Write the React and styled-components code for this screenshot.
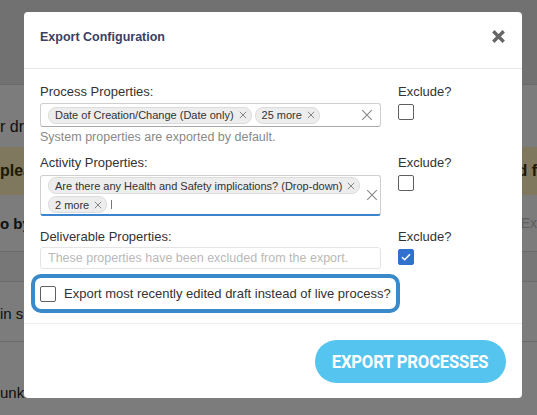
import React from "react";
import styled, { createGlobalStyle } from "styled-components";

const Global = createGlobalStyle`
  html, body { margin: 0; padding: 0; }
  body { font-family: "Liberation Sans", Arial, sans-serif; width: 537px; height: 415px; overflow: hidden; background: #f9f9f9; }
`;

const Page = styled.div`
  position: relative;
  width: 537px;
  height: 415px;
  overflow: hidden;
  background: #f9f9f9;
`;

const TopBar = styled.div`
  height: 85px;
  background: #e3e3e3;
  border-bottom: 1px solid #d4d4d4;
  box-sizing: border-box;
`;

const PageRow = styled.div`
  display: flex;
  justify-content: space-between;
  align-items: center;
  height: ${(p) => p.h}px;
  background: ${(p) => p.bg || "transparent"};
  border-bottom: ${(p) => (p.line ? "1px solid #d6d6d6" : "none")};
  box-sizing: border-box;
  white-space: nowrap;
  font-size: 16px;
  color: #222;
  padding-top: ${(p) => p.pt || 0}px;
`;

const PageText = styled.span`
  font-weight: ${(p) => p.weight || 400};
  color: ${(p) => p.color || "#222"};
  font-size: ${(p) => p.size || 16}px;
`;

const Overlay = styled.div`
  position: absolute;
  inset: 0;
  background: rgba(0, 0, 0, 0.5);
  padding: 12px 0 0 24px;
  box-sizing: border-box;
`;

const Modal = styled.div`
  width: 498px;
  height: 386px;
  background: #fff;
  border-radius: 4px;
  display: flex;
  flex-direction: column;
  box-sizing: border-box;
`;

const Header = styled.div`
  height: 57px;
  display: flex;
  align-items: center;
  justify-content: space-between;
  padding: 0 16px 6px 16px;
  border-bottom: 1px solid #e6e6e6;
  box-sizing: border-box;
`;

const Title = styled.h2`
  margin: 0;
  font-size: 12.5px;
  font-weight: 700;
  color: #3b4064;
`;

const CloseBtn = styled.button`
  border: 0;
  background: none;
  padding: 0;
  width: 14px;
  height: 14px;
  display: flex;
  cursor: pointer;
`;

const Body = styled.div`
  padding: 15px 16px 10px 16px;
  display: flex;
  flex-direction: column;
  border-bottom: 1px solid #ececec;
`;

const Section = styled.div`
  display: grid;
  grid-template-columns: 341px 1fr;
  column-gap: 17px;
  margin-top: ${(p) => p.mt || 0}px;
`;

const Col = styled.div`
  display: flex;
  flex-direction: column;
`;

const Label = styled.label`
  font-size: 13px;
  line-height: 16px;
  color: #333;
`;

const Field = styled.div`
  margin-top: ${(p) => p.mt}px;
  min-height: ${(p) => p.h}px;
  box-sizing: border-box;
  border: 1px solid ${(p) => (p.disabled ? "#e4e4e4" : "#cfcfcf")};
  border-bottom: ${(p) =>
    p.focus ? "2px solid #3d84cf" : p.disabled ? "1px solid #e4e4e4" : "1px solid #a8a8a8"};
  border-radius: 3px;
  display: flex;
  align-items: center;
  padding: 0 6px 0 7px;
  gap: 6px;
`;

const Tags = styled.div`
  flex: 1;
  display: flex;
  flex-wrap: wrap;
  gap: 2px 3px;
  align-items: center;
`;

const Tag = styled.span`
  display: inline-flex;
  align-items: center;
  gap: 5px;
  height: 15px;
  padding: 0 4px 0 6px;
  background: #ededed;
  border: 1px solid #dcdcdc;
  border-radius: 8px;
  font-size: 11px;
  color: #333;
  white-space: nowrap;
`;

const Caret = styled.span`
  width: 1px;
  height: 9px;
  background: #777;
  margin-left: 1px;
`;

const ClearIcon = styled.span`
  display: flex;
  flex: none;
  width: 12px;
  height: 12px;
  margin-right: 1px;
`;

const Placeholder = styled.span`
  font-size: 12.5px;
  color: #b9b9b9;
`;

const Help = styled.div`
  font-size: 12.5px;
  line-height: 16px;
  color: #8a8a8a;
  margin-top: 2px;
`;

const Box = styled.span`
  width: 16px;
  height: 16px;
  box-sizing: border-box;
  border-radius: 2px;
  border: 1px solid ${(p) => (p.checked ? "#3270cd" : "#606060")};
  background: ${(p) => (p.checked ? "#3270cd" : "#fff")};
  display: inline-flex;
  align-items: center;
  justify-content: center;
  margin-top: ${(p) => p.mt || 0}px;
  flex: none;
`;

const Highlight = styled.div`
  margin: 5px 0 0 -9px;
  width: 369px;
  height: 39px;
  box-sizing: border-box;
  border: 4px solid #3a8ac9;
  border-radius: 10px;
  display: flex;
  align-items: center;
  gap: 8px;
  padding-left: 5px;
  font-size: 13px;
  color: #333;
  white-space: nowrap;
`;

const Footer = styled.div`
  flex: 1;
  display: flex;
  justify-content: flex-end;
  align-items: flex-start;
  padding: 16px 16px 0 0;
`;

const ExportBtn = styled.button`
  width: 191px;
  height: 43px;
  border: 0;
  border-radius: 22px;
  background: #55c4ee;
  color: #fff;
  font-family: Roboto, "Liberation Sans", sans-serif;
  font-weight: 700;
  font-size: 18.5px;
  letter-spacing: -0.2px;
  cursor: pointer;
  display: flex;
  align-items: center;
  justify-content: center;
`;

const BtnText = styled.span`
  display: inline-block;
  transform: scaleX(0.9);
`;

const SmallX = ({ size = 8, color = "#777", w = 1.1 }) => (
  <svg width={size} height={size} viewBox="0 0 10 10">
    <path d="M1 1L9 9M9 1L1 9" stroke={color} strokeWidth={w} fill="none" />
  </svg>
);

const Check = () => (
  <svg width="10" height="8" viewBox="0 0 10 8">
    <path d="M1 4.2L3.7 6.8L9 1.2" stroke="#fff" strokeWidth="1.5" fill="none" />
  </svg>
);

const sections = [
  {
    label: "Process Properties:",
    tags: ["Date of Creation/Change (Date only)", "25 more"],
    h: 24,
    mt: 0,
    lmt: 3,
    help: "System properties are exported by default.",
    checked: false,
  },
  {
    label: "Activity Properties:",
    tags: ["Are there any Health and Safety implications? (Drop-down)", "2 more"],
    h: 41,
    mt: 10,
    lmt: 4,
    focus: true,
    caret: true,
    checked: false,
  },
  {
    label: "Deliverable Properties:",
    placeholder: "These properties have been excluded from the export.",
    h: 22,
    mt: 13,
    lmt: 2,
    disabled: true,
    checked: true,
  },
];

export default function App() {
  return (
    <>
      <Global />
      <Page>
        <TopBar />
        <PageRow h={62} pt={22}>
          <PageText weight={500}>r draft</PageText>
        </PageRow>
        <PageRow h={48} bg="#fff0bf">
          <PageText weight={700} color="#3d3000">please</PageText>
          <PageText weight={700} color="#3d3000">d f</PageText>
        </PageRow>
        <PageRow h={57} line>
          <PageText weight={700} size={15}>o by</PageText>
          <PageText size={14} color="#bbb">Ex</PageText>
        </PageRow>
        <PageRow h={30} bg="#efefef" line />
        <PageRow h={60} line pt={4}>
          <PageText size={15}>in su</PageText>
        </PageRow>
        <PageRow h={73} pt={27}>
          <PageText size={15}>unkr</PageText>
        </PageRow>

        <Overlay>
          <Modal>
            <Header>
              <Title>Export Configuration</Title>
              <CloseBtn aria-label="Close">
                <SmallX size={13} color="#666" w={2.6} />
              </CloseBtn>
            </Header>
            <Body>
              {sections.map((s) => (
                <Section key={s.label} mt={s.mt}>
                  <Col>
                    <Label>{s.label}</Label>
                    <Field mt={s.lmt} h={s.h} focus={s.focus} disabled={s.disabled}>
                      {s.tags ? (
                        <>
                          <Tags>
                            {s.tags.map((t) => (
                              <Tag key={t}>
                                {t}
                                <SmallX size={8} />
                              </Tag>
                            ))}
                            {s.caret && <Caret />}
                          </Tags>
                          <ClearIcon>
                            <SmallX size={12} color="#888" w={0.9} />
                          </ClearIcon>
                        </>
                      ) : (
                        <Placeholder>{s.placeholder}</Placeholder>
                      )}
                    </Field>
                    {s.help && <Help>{s.help}</Help>}
                  </Col>
                  <Col>
                    <Label>Exclude?</Label>
                    <Box checked={s.checked} mt={4}>
                      {s.checked && <Check />}
                    </Box>
                  </Col>
                </Section>
              ))}
              <Highlight>
                <Box />
                Export most recently edited draft instead of live process?
              </Highlight>
            </Body>
            <Footer>
              <ExportBtn>
                <BtnText>EXPORT PROCESSES</BtnText>
              </ExportBtn>
            </Footer>
          </Modal>
        </Overlay>
      </Page>
    </>
  );
}
